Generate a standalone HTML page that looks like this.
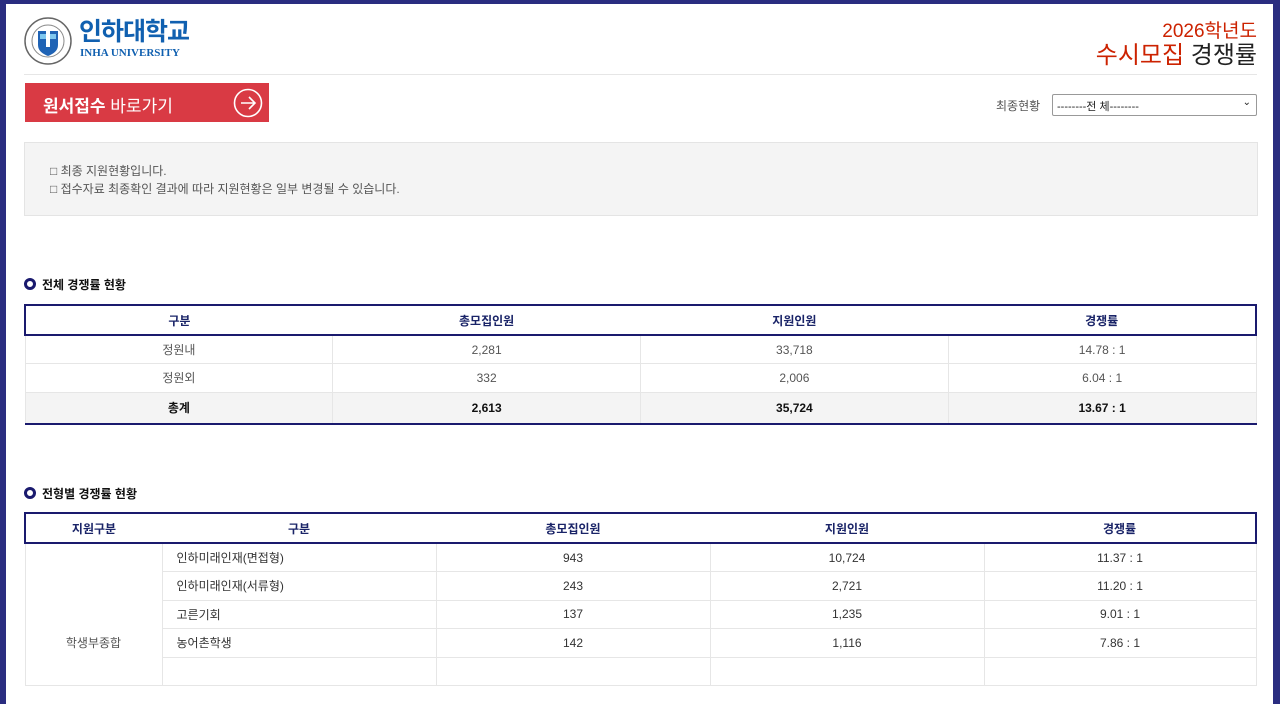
<!DOCTYPE html>
<html><head><meta charset="utf-8">
<style>
*{margin:0;padding:0;box-sizing:border-box}
body{width:1280px;height:661px;overflow:hidden;background:#2a2d80;font-family:"Liberation Sans","Noto Sans CJK KR","NanumGothic",sans-serif;position:relative}
#w{position:absolute;left:6px;top:4px;width:1267px;height:700px;background:#fff}
.a{position:absolute}
table{border-collapse:collapse;table-layout:fixed;position:absolute;left:24px;width:1233px;font-size:12px}
th{color:#1a2468;font-weight:bold;height:30px;border-top:2px solid #1a1a6e;border-bottom:2px solid #1a1a6e}
th:first-child{border-left:2px solid #1a1a6e}th:last-child{border-right:2px solid #1a1a6e}
td{text-align:center;border:1px solid #e6e6e6;border-top:none;color:#555}
#t1 td{height:28.5px}
#t1 tr.tot td{background:#f4f4f4;color:#111;font-weight:bold;height:32px;border-bottom:2px solid #1a1a6e}
#t2 td{height:28.5px;color:#333}
#t2 td.l{text-align:left;padding-left:14px}
.h{position:absolute;left:24px;font-size:12px;font-weight:bold;color:#111}
.h:before{content:"";display:inline-block;width:6px;height:6px;border:3px solid #1a1a6e;border-radius:50%;margin-right:6px;vertical-align:-1px}
</style></head><body>
<div id="w"></div>
<svg class="a" style="left:24px;top:17px" width="48" height="48" viewBox="0 0 48 48">
<circle cx="24" cy="24" r="23" fill="#fff" stroke="#666" stroke-width="1.5"/>
<circle cx="24" cy="24" r="16" fill="none" stroke="#888" stroke-width="1"/>
<path d="M14 14h20v14c0 6-5 9-10 11-5-2-10-5-10-11z" fill="#1f63b5"/>
<rect x="16" y="17" width="16" height="5" fill="#7ec7ef"/>
<rect x="22" y="14" width="4" height="16" fill="#fff"/>
</svg>
<div class="a" style="left:79px;top:19px;font-size:25px;line-height:26px;font-weight:bold;color:#1060b0;letter-spacing:-1px">인하대학교</div>
<div class="a" style="left:80px;top:47px;font-size:11px;line-height:12px;font-family:'Liberation Serif',serif;color:#1060b0;font-weight:bold">INHA UNIVERSITY</div>
<div class="a" style="right:23px;top:21px;font-size:19px;line-height:22px;color:#cc2200;text-align:right">2026학년도</div>
<div class="a" style="right:23px;top:42px;font-size:24px;line-height:28px;color:#cc2200;text-align:right">수시모집 <span style="color:#222">경쟁률</span></div>
<div class="a" style="left:24px;top:74px;width:1233px;height:1px;background:#e6e6e6"></div>
<div class="a" style="left:25px;top:83px;width:244px;height:39px;background:#d93a44;color:#fff;font-size:17px;padding:9px 0 0 18px"><b>원서접수</b> 바로가기
<svg style="position:absolute;left:208px;top:5px" width="30" height="30" viewBox="0 0 30 30"><circle cx="15" cy="15" r="13.5" fill="none" stroke="#fff" stroke-width="1.6"/><path d="M8 15h14M16 9l6 6-6 6" fill="none" stroke="#fff" stroke-width="1.6"/></svg></div>
<div class="a" style="left:996px;top:97px;font-size:12px;color:#555">최종현황</div>
<div class="a" style="left:1052px;top:94px;width:205px;height:22px;border:1px solid #999;border-radius:2px;font-size:11px;padding:3px 0 0 4px;color:#222">--------전 체--------<span style="position:absolute;right:5px;top:2px;font-size:10px">⌄</span></div>
<div class="a" style="left:24px;top:142px;width:1234px;height:74px;background:#f4f4f4;border:1px solid #e4e4e4;font-size:12px;color:#555;padding:19px 0 0 25px;line-height:18px">□ 최종 지원현황입니다.<br>□ 접수자료 최종확인 결과에 따라 지원현황은 일부 변경될 수 있습니다.</div>
<div class="h" style="top:276px">전체 경쟁률 현황</div>
<table id="t1" style="top:304px">
<tr><th>구분</th><th>총모집인원</th><th>지원인원</th><th>경쟁률</th></tr>
<tr><td>정원내</td><td>2,281</td><td>33,718</td><td>14.78 : 1</td></tr>
<tr><td>정원외</td><td>332</td><td>2,006</td><td>6.04 : 1</td></tr>
<tr class="tot"><td>총계</td><td>2,613</td><td>35,724</td><td>13.67 : 1</td></tr>
</table>
<div class="h" style="top:485px">전형별 경쟁률 현황</div>
<table id="t2" style="top:512px">
<col style="width:137px"><col style="width:274px"><col style="width:274px"><col style="width:274px"><col>
<tr><th>지원구분</th><th>구분</th><th>총모집인원</th><th>지원인원</th><th>경쟁률</th></tr>
<tr><td rowspan="5" style="color:#555;vertical-align:top;padding-top:90px">학생부종합</td><td class="l">인하미래인재(면접형)</td><td>943</td><td>10,724</td><td>11.37 : 1</td></tr>
<tr><td class="l">인하미래인재(서류형)</td><td>243</td><td>2,721</td><td>11.20 : 1</td></tr>
<tr><td class="l">고른기회</td><td>137</td><td>1,235</td><td>9.01 : 1</td></tr>
<tr><td class="l">농어촌학생</td><td>142</td><td>1,116</td><td>7.86 : 1</td></tr>
<tr><td class="l">&nbsp;</td><td></td><td></td><td></td></tr>
</table>
</body></html>
